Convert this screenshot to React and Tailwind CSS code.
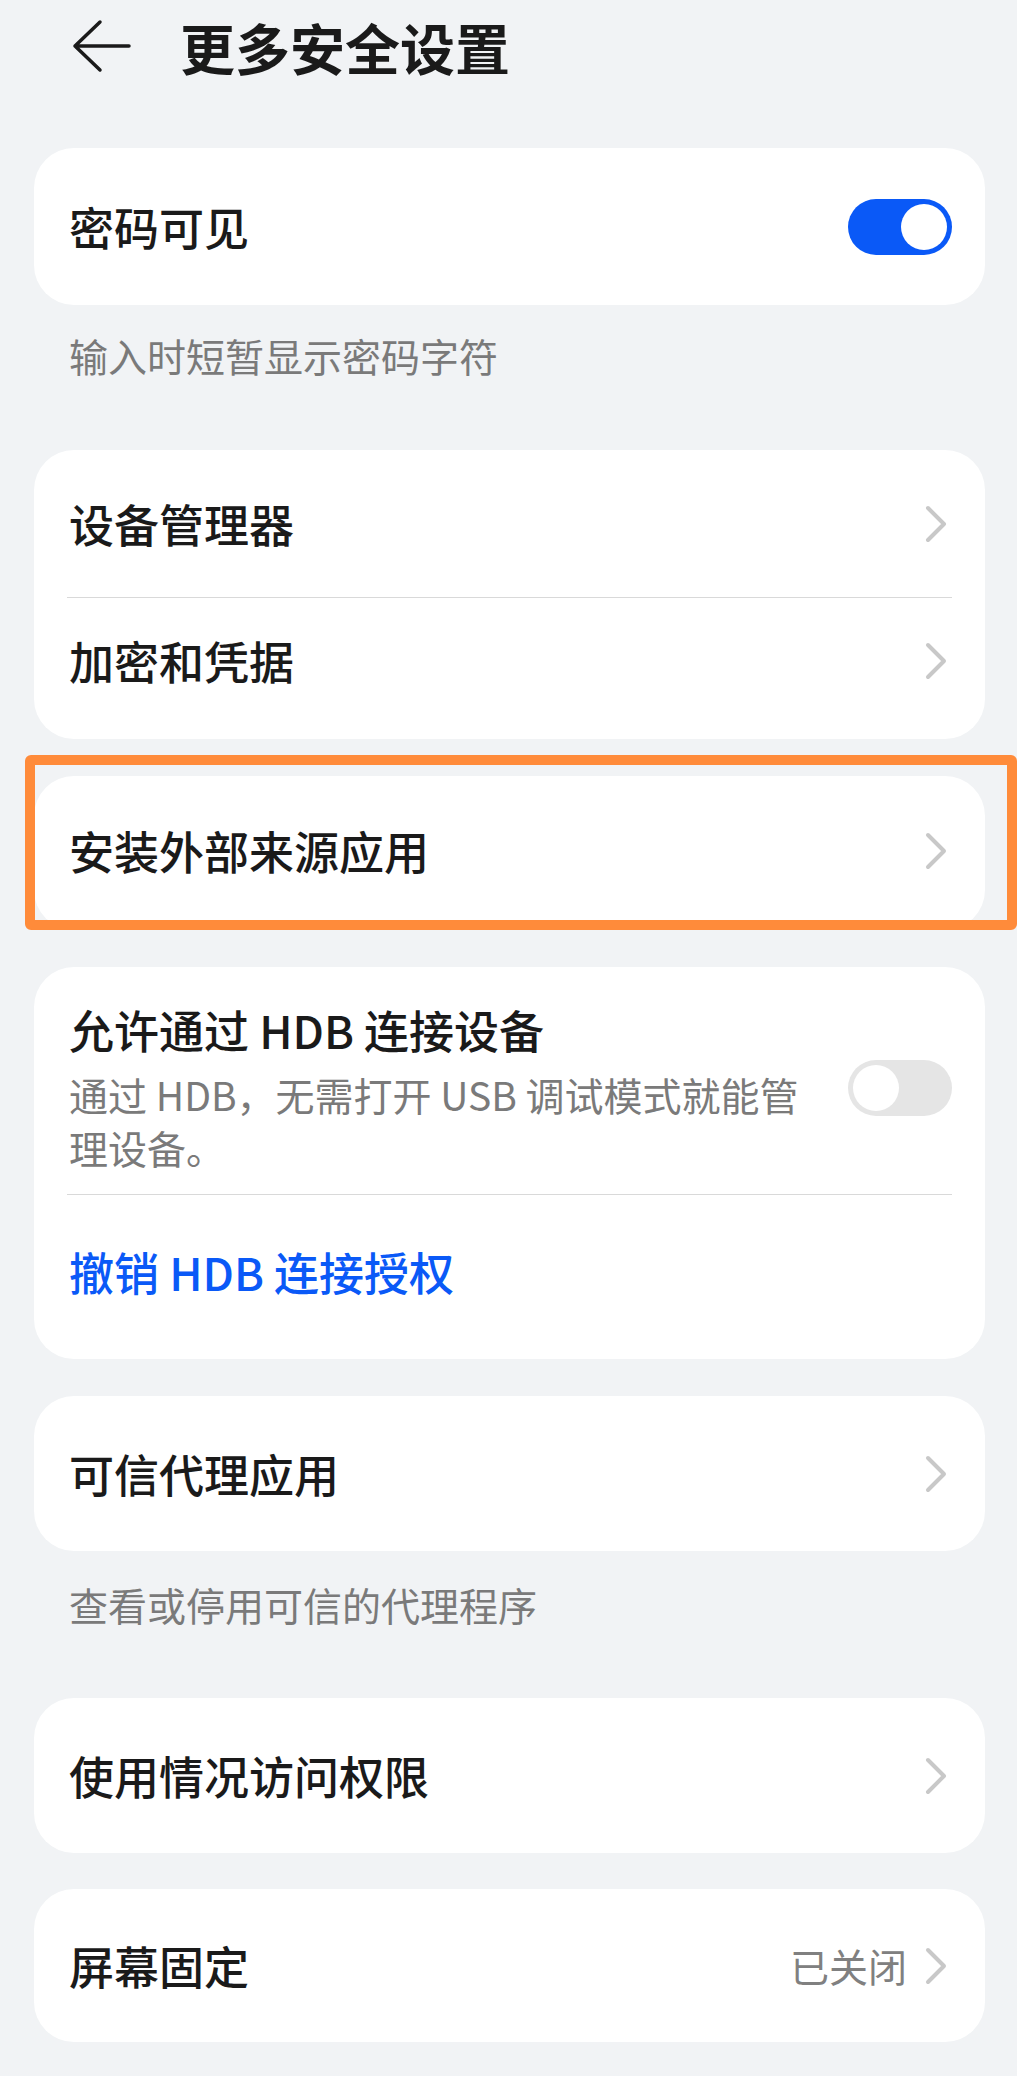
import React from 'react';

const font = { fontFamily: '"Noto Sans CJK SC", "Noto Sans", sans-serif' };

const Chevron = () => (
    <svg width="22" height="38" viewBox="0 0 22 38" className="shrink-0">
        <path d="M3 3 L19 19 L3 35" fill="none" stroke="#c8c8c8" strokeWidth="4" strokeLinecap="round" strokeLinejoin="round" />
    </svg>
);

const Toggle = ({ on }) => (
    <div className={`w-[104px] h-[56px] rounded-full p-[5px] flex shrink-0 ${on ? 'bg-[#0a59f7] justify-end' : 'bg-[#e5e5e5] justify-start'}`}>
        <div className="w-[46px] h-[46px] rounded-full bg-white" />
    </div>
);

const Row = ({ title, value, className = 'h-[155px]' }) => (
    <div className={`flex items-center pl-[35px] pr-[38px] ${className}`}>
        <span className="flex-1 text-[45px] leading-[58px] font-medium text-[#1a1a1a]">{title}</span>
        {value && <span className="text-[39px] text-[#808080] mr-[18px]">{value}</span>}
        <Chevron />
    </div>
);

const Card = ({ children, className = '' }) => (
    <div className={`bg-white rounded-[40px] ${className}`}>{children}</div>
);

const Hint = ({ children, className = '' }) => (
    <div className={`pl-[35px] text-[39px] leading-[50px] text-[#7a7a7a] ${className}`}>{children}</div>
);

export default function App() {
    return (
        <div className="min-h-[2076px] bg-[#f1f3f5] pl-[34px] pr-[32px]" style={font}>
            {/* header */}
            <div className="h-[92px] flex items-center">
                <svg width="60" height="54" viewBox="0 0 60 54" className="ml-[38px]">
                    <path d="M28 3 L3 27 L28 51 M3 27 H57" fill="none" stroke="#1a1a1a" strokeWidth="3.5" strokeLinecap="round" strokeLinejoin="round" />
                </svg>
                <h1 className="ml-[48px] text-[55px] font-bold text-[#1a1a1a]">更多安全设置</h1>
            </div>

            <Card className="mt-[56px] h-[157px] flex items-center pl-[35px] pr-[33px]">
                <span className="flex-1 text-[45px] font-medium text-[#1a1a1a]">密码可见</span>
                <Toggle on />
            </Card>
            <Hint className="mt-[25px]">输入时短暂显示密码字符</Hint>

            <Card className="mt-[70px]">
                <Row title="设备管理器" className="h-[147px]" />
                <div className="h-px bg-[#d9d9d9] ml-[33px] mr-[33px]" />
                <Row title="加密和凭据" className="h-[141px] pb-[15px]" />
            </Card>

            <div className="relative mt-[37px]">
                <Card>
                    <Row title="安装外部来源应用" className="h-[154px] pb-[4px]" />
                </Card>
                <div className="absolute left-[-9px] top-[-21px] w-[992px] h-[175px] border-[10px] border-[#ff8b3a] rounded-[6px] pointer-events-none" />
            </div>

            <Card className="mt-[37px]">
                <div className="flex items-center pl-[35px] pr-[33px] pt-[34px] pb-[20px]">
                    <div className="flex-1">
                        <div className="text-[45px] leading-[58px] font-medium text-[#1a1a1a]">允许通过 HDB 连接设备</div>
                        <div className="mt-[9px] w-[745px] text-[39px] leading-[53px] text-[#7a7a7a]">通过 HDB，无需打开 USB 调试模式就能管理设备。</div>
                    </div>
                    <Toggle on={false} />
                </div>
                <div className="h-px bg-[#d9d9d9] ml-[33px] mr-[33px]" />
                <div className="pl-[35px] pt-[48px] pb-[58px] text-[45px] leading-[58px] font-medium text-[#0a59f7]">撤销 HDB 连接授权</div>
            </Card>

            <Card className="mt-[37px]">
                <Row title="可信代理应用" />
            </Card>
            <Hint className="mt-[28px]">查看或停用可信的代理程序</Hint>

            <Card className="mt-[69px]">
                <Row title="使用情况访问权限" />
            </Card>

            <Card className="mt-[36px]">
                <Row title="屏幕固定" value="已关闭" className="h-[153px]" />
            </Card>
        </div>
    );
}
